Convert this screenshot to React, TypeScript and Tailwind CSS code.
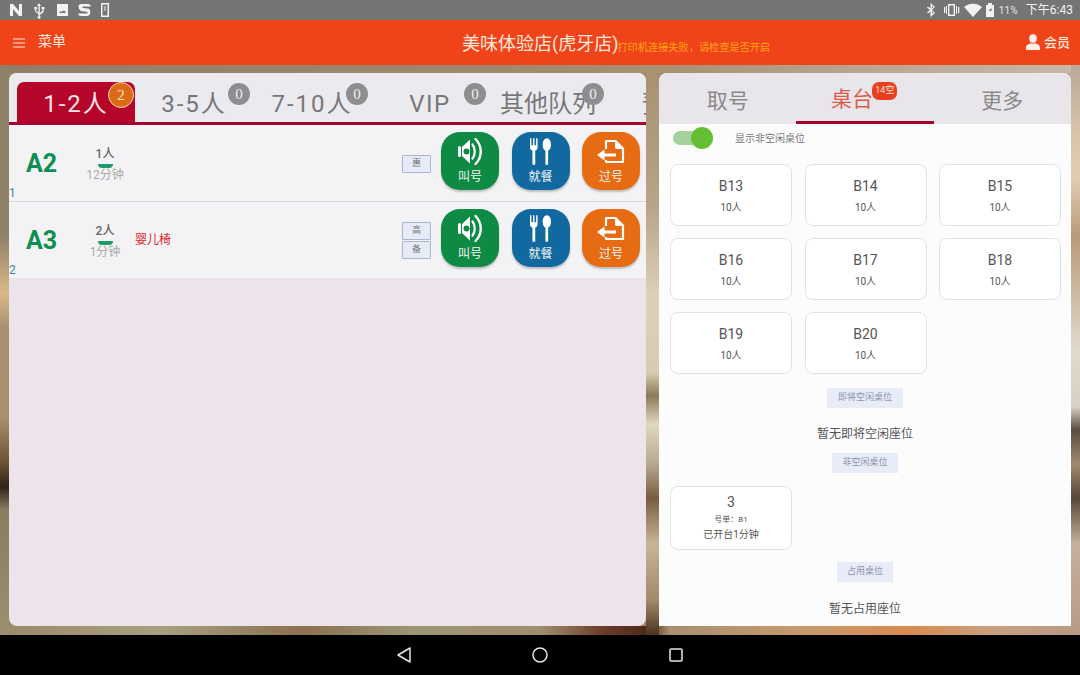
import React from "react";

const font = { fontFamily: 'Roboto, "Noto Sans CJK SC", sans-serif' };

function SpeakerIcon() {
  return (
    <svg viewBox="0 0 27 29" className="w-[27px] h-[29px]" fill="none" stroke="white">
      <path d="M2.500 10.500v8" strokeWidth="3" strokeLinecap="round" />
      <path d="M5 10 13 2.500v24L5 19z" fill="white" stroke="none" />
      <circle cx="9.500" cy="14.500" r="3" fill="#0f8a45" stroke="none" />
      <path d="M15.500 7.500c3 4 3 10 0 14" strokeWidth="2.200" strokeLinecap="round" />
      <path d="M18.500 2c7 7 7 18 0 25" strokeWidth="2.400" strokeLinecap="round" />
    </svg>
  );
}

function ForkIcon() {
  return (
    <svg viewBox="5 2 20.500 26" className="w-[21px] h-[27px] my-[1px]" fill="white" stroke="none">
      <path d="M5 2h1.400v7H8V2h1.400v7H11V2h1.400v9c0 1.600-1 2.600-2.300 3V28H7.400V14C6 13.600 5 12.600 5 11z" />
      <path d="M21.500 2c2.600 0 4 3 4 6.500 0 3-1.300 5.200-2.800 5.800V28h-2.600V14.300c-1.500-.6-2.700-2.800-2.700-5.800C17.400 5 18.900 2 21.500 2z" />
    </svg>
  );
}

function PassIcon() {
  return (
    <svg viewBox="0 0 28 25" className="w-[28px] h-[25px] my-[2px]" fill="none" stroke="white" strokeWidth="2.200">
      <path d="M9 10V2h9.500L26 9.500V23H9v-2" strokeLinejoin="round" />
      <path d="M18 1.500 26.500 10H20c-1.500 0-2-.8-2-2z" fill="white" stroke="none" />
      <path d="M0 16 7.500 10.500v11z" fill="white" stroke="none" />
      <path d="M6 16h13" strokeWidth="3" />
    </svg>
  );
}

function ActionButton({ color, label, icon }: { color: string; label: string; icon: React.ReactNode }) {
  return (
    <div className={`w-[58px] h-[58px] rounded-[19px] flex flex-col items-center pt-[5px] text-[#f0f5f2] shadow-[0_2px_2px_rgba(0,0,0,0.22)] ${color}`}>
      {icon}
      <span className="text-[12px] leading-[16px] mt-[3px]">{label}</span>
    </div>
  );
}

function Actions() {
  return (
    <div className="flex gap-[12.500px] ml-[10px] -mt-[5px]">
      <ActionButton color="bg-[#0f8a45]" label="叫号" icon={<SpeakerIcon />} />
      <ActionButton color="bg-[#12699f]" label="就餐" icon={<ForkIcon />} />
      <ActionButton color="bg-[#e66b12]" label="过号" icon={<PassIcon />} />
    </div>
  );
}

function Bowl() {
  return <div className="w-[15px] h-[4px] bg-[#1e9a68] rounded-b-[8px] mt-[3px] mb-[1px]" />;
}

function Row({ index, code, people, time, note, tags, last }: { index: string; code: string; people: string; time: string; note?: string; tags: string[]; last?: boolean }) {
  return (
    <div className={`relative h-[76px] box-content flex items-center bg-[#f3f3f5] pr-[6px] ${last ? "" : "border-b border-[#d8d9dd]"}`}>
      <span className="absolute left-0 bottom-[1px] text-[12px] leading-[14px] text-[#3f86a0]">{index}</span>
      <span className="ml-[17px] w-[38px] text-[25px] font-bold text-[#0e8f4f] mt-[1px]">{code}</span>
      <div className="w-[60px] ml-[11px] flex flex-col items-center mt-[3px]">
        <span className="text-[12px] leading-[13px] font-medium text-[#666]">{people}</span>
        <Bowl />
        <span className="text-[12px] leading-[13px] text-[#aaa]">{time}</span>
      </div>
      {note && <span className="text-[12px] text-[#d8232a]">{note}</span>}
      <div className="ml-auto flex flex-col mt-[1px]">
        {tags.map((t, i) => (
          <div key={t} className={`w-[29px] h-[18px] flex items-center justify-center bg-[#e6ebf7] border border-[#a9b6d0] rounded-[1px] text-[9px] text-[#777] ${i > 0 ? "mt-[1px]" : ""}`}>
            {t}
          </div>
        ))}
      </div>
      <Actions />
    </div>
  );
}

function QueueTab({ label, count, active, tracking }: { label: string; count?: number; active?: boolean; tracking: string }) {
  return (
    <div className={`relative shrink-0 w-[118px] h-[40px] flex items-center justify-center pt-[3px] rounded-t-[7px] text-[24px] whitespace-nowrap ${tracking} ${active ? "bg-[#b5052a] text-[#fbe3e6]" : "text-[#777]"}`}>
      {label}
      {count !== undefined &&
        (active ? (
          <span className="absolute right-[1px] top-0 w-[26px] h-[26px] rounded-full flex items-center justify-center text-[15px] tracking-normal bg-[#dc6a14] border border-[#fbd9b5] text-[#fde6c8] font-['Liberation_Serif',serif]">
            {count}
          </span>
        ) : (
          <span className="absolute right-[3px] top-[1px] w-[22px] h-[22px] rounded-full flex items-center justify-center text-[15px] tracking-normal bg-[#8e8e90] text-[#f1f1f1] font-['Liberation_Serif',serif]">
            {count}
          </span>
        ))}
    </div>
  );
}

function TableCard({ name }: { name: string }) {
  return (
    <div className="h-[62px] rounded-[8px] bg-white border-[1.500px] border-[#e2e2e4] flex flex-col items-center justify-center text-[#555]">
      <span className="text-[14px] leading-[20px]">{name}</span>
      <span className="text-[10px] leading-[14px] mt-[5px]">10人</span>
    </div>
  );
}

function Chip({ label, width }: { label: string; width: string }) {
  return (
    <div className="flex justify-center">
      <div className={`h-[20px] flex items-center justify-center bg-[#e8ecf8] text-[9px] text-[#8f96ab] ${width}`}>{label}</div>
    </div>
  );
}

export default function App() {
  const free = ["B13", "B14", "B15", "B16", "B17", "B18", "B19", "B20"];
  return (
    <div className="w-[1080px] h-[675px] flex flex-col overflow-hidden" style={font}>
      {/* status bar */}
      <div className="h-[20px] bg-[#757575] flex items-center pl-[10px] pr-[7px] text-white">
        <svg viewBox="0 0 100 20" className="w-[100px] h-[20px]" fill="#f2f2f2">
          <path d="M0 4h3l6 7V4h3v12H9L3 9v7H0z" />
          <path d="M29 3l2 3h-1.200v7l2.500-2V9h-.8V7h3v2h-.8v3l-3.900 3v1a1.500 1.500 0 1 1-1.400 0v-2l-3.300-2.500V9.500h-.8V7h2.800v2.500H26v1.200l2.400 1.800V6H27z" />
          <path d="M47 4h11v12H47zm2 9h7l-2-3-2 2-1-1z" fillRule="evenodd" />
          <path d="M71 4h7c2 0 2.500 1 3 2.500h-8c-1 0-1 1.500 0 1.500l5 .5c3.500.5 3 7.500-1 7.500h-6c-2 0-2.500-1-3-2.500h8.500c1.500 0 1.500-1.700 0-1.700l-4.500-.5C68 10.500 67.500 4 71 4z" />
          <path d="M91 3h8v14h-8zm1.500 1.500v11h5v-11zM94.500 6h1v5h-1z" fillRule="evenodd" />
        </svg>
        <div className="ml-auto flex items-center">
          <svg viewBox="0 0 68 16" className="w-[68px] h-[16px]" fill="#f2f2f2">
            <path d="M3.500 1l4.500 4-3 3 3 3-4.500 4V9.500L1 11.500 0 10.500 2.800 8 0 5.500l1-1 2.500 2zM5 4v2.800L6.300 5.300zm0 5.200V12l1.300-1.500z" fillRule="evenodd" />
            <path d="M21 2h7v12h-7zm1.400 1.400v9.200h4.200V3.400zM17 5h1.300v6H17zm2-1h1v8h-1zm10 0h1v8h-1zm2 1h1.300v6H31z" fillRule="evenodd" />
            <path d="M37 5c5-4.500 13-4.500 18 0l-9 10z" />
            <path d="M59 3h2V1h4v2h2v12h-8zm2.500 6h3V6z" fillRule="evenodd" />
          </svg>
          <span className="ml-[4px] text-[10px] text-[#e4e4e4] tracking-[0.200px]">11%</span>
          <span className="ml-[8px] text-[12px] text-[#f2f2f2]">下午6:43</span>
        </div>
      </div>

      {/* header */}
      <div className="h-[45px] bg-[#f1431a] flex items-center text-[#fde8dc]">
        <svg viewBox="0 0 12 10" className="ml-[13px] w-[12px] h-[10px]" stroke="#fdeee4" strokeWidth="1.200">
          <path d="M0 1h12M0 5h12M0 9h12" />
        </svg>
        <span className="ml-[13px] text-[14px] -mt-[3px]">菜单</span>
        <div className="ml-[396px] pt-[2px] flex items-baseline whitespace-nowrap">
          <span className="text-[18px] leading-[24px]">美味体验店(虎牙店)</span>
          <span className="text-[10.200px] text-[#ffa514] -ml-[1px] translate-y-[1px]">打印机连接失败，请检查是否开启</span>
        </div>
        <div className="ml-auto mr-[10px] flex items-center gap-[4px] text-[13px] font-medium">
          <svg viewBox="0 0 14 16" className="w-[14px] h-[16px] -mt-[2px]" fill="#fdf0e8">
            <ellipse cx="7" cy="4.500" rx="3.800" ry="4.300" />
            <path d="M0 16v-2.500C0 11 3 9.800 5 9.300c1.300.5 2.700.5 4 0 2 .5 5 1.700 5 4.200V16z" />
          </svg>
          会员
        </div>
      </div>

      {/* main */}
      <div className="h-[570px] flex gap-[13px] pt-[8px] pb-[9px] px-[9px] [background:linear-gradient(180deg,#8f8068_0%,#8f8068_30%,#d8b98a_40%,#a89070_46%,#a8906c_62%,#6a5030_70%,#2e2418_74%,#8a7c60_78%,#9c9070_100%)_0_0/9px_100%_no-repeat,linear-gradient(180deg,#a89070_0%,#b8a488_25%,#dcd0b8_40%,#d8ccb0_54%,#8a7a58_58%,#e0d8c0_63%,#b8a890_70%,#7a5c40_76%,#c8b498_84%,#a08868_94%,#4a3420_100%)_646px_0/13px_100%_no-repeat,linear-gradient(180deg,#b8a898_0%,#d8c4aa_12%,#e2cdb4_20%,#b89a78_30%,#e0dacc_50%,#d8d0c4_60%,#5a4c40_64%,#a08a70_70%,#584838_76%,#c4b09c_84%,#b89a88_100%)_1071px_0/9px_100%_no-repeat,linear-gradient(90deg,#9a8a6c_0%,#a8a080_15%,#8a7050_28%,#9c9474_38%,#a08f6e_50%,#6a3a28_56%,#4a2a1c_60%,#a89070_62%,#c89a6c_75%,#d88a50_84%,#c8a080_92%,#b89a88_100%)_0_100%/100%_9px_no-repeat,linear-gradient(90deg,#8f7d66_0%,#a08a6c_50%,#a89070_61%,#b8a690_80%,#c8b8a8_100%)_0_0/100%_8px_no-repeat,linear-gradient(90deg,#9a8a6c_0%,#a08a6c_60%,#c0a890_100%)]">
        {/* left panel */}
        <div className="w-[637px] rounded-[8px] overflow-hidden bg-[#ece4ea] flex flex-col">
          <div className="h-[52px] pt-[9px] bg-[#ebebef] border-b-[3px] border-[#a5062f]">
            <div className="flex pl-[8px] overflow-hidden">
              <QueueTab label="1-2人" count={2} active tracking="tracking-[2px]" />
              <QueueTab label="3-5人" count={0} tracking="tracking-[2px]" />
              <QueueTab label="7-10人" count={0} tracking="tracking-[2px]" />
              <QueueTab label="VIP" count={0} tracking="tracking-[1.500px]" />
              <QueueTab label="其他队列" count={0} tracking="tracking-normal" />
              <QueueTab label="预约" tracking="tracking-normal" />
            </div>
          </div>
          <Row index="1" code="A2" people="1人" time="12分钟" tags={["惠"]} />
          <Row index="2" code="A3" people="2人" time="1分钟" note="婴儿椅" tags={["高", "备"]} last />
        </div>

        {/* right panel */}
        <div className="w-[412px] rounded-t-[8px] overflow-hidden bg-[#fcfcfd] flex flex-col">
          <div className="h-[51px] bg-[#e8e6ea] grid grid-cols-3 text-[21px] text-[#8a8a8a]">
            <div className="flex items-center justify-center pt-[6px]">取号</div>
            <div className="relative flex items-center justify-center pt-[6px] pr-[26px] text-[#dc5a48] border-b-[3px] border-[#a5062f]">
              桌台
              <span className="absolute left-[76px] top-[9px] w-[25px] h-[18px] rounded-[7px] bg-[#ea3f1c] text-[9px] text-[#fde3da] flex items-center justify-center">14空</span>
            </div>
            <div className="flex items-center justify-center pt-[6px]">更多</div>
          </div>

          <div className="flex items-center h-[28px] pl-[14px]">
            <div className="relative w-[40px] h-[14px] rounded-full bg-[#a3d39a]">
              <span className="absolute right-0 top-[-4px] w-[22px] h-[22px] rounded-full bg-[#64c032]" />
            </div>
            <span className="ml-[22px] text-[10px] text-[#777]">显示非空闲桌位</span>
          </div>

          <div className="grid grid-cols-[122px_122px_122px] gap-x-[12.500px] gap-y-[12px] px-[11px] mt-[12px]">
            {free.map((n) => (
              <TableCard key={n} name={n} />
            ))}
          </div>

          <div className="mt-[14px]"><Chip label="即将空闲桌位" width="w-[76px]" /></div>
          <div className="text-center text-[12px] leading-[18px] text-[#555] mt-[17px]">暂无即将空闲座位</div>
          <div className="mt-[10px]"><Chip label="非空闲桌位" width="w-[66px]" /></div>

          <div className="grid grid-cols-[122px_122px_122px] px-[11px] mt-[13px]">
            <div className="h-[64px] rounded-[8px] bg-white border-[1.500px] border-[#e2e2e4] flex flex-col items-center justify-center text-[#555]">
              <span className="text-[14px] leading-[18px]">3</span>
              <span className="text-[8px] leading-[14px] mt-[2px]">号单：B1</span>
              <span className="text-[10px] leading-[16px]">已开台1分钟</span>
            </div>
          </div>

          <div className="mt-[12px]"><Chip label="占用桌位" width="w-[56px]" /></div>
          <div className="text-center text-[12px] leading-[18px] text-[#555] mt-[18px]">暂无占用座位</div>
        </div>
      </div>

      {/* nav */}
      <div className="h-[40px] bg-black flex items-center justify-center gap-[120px]">
        <svg viewBox="0 0 16 18" className="w-[16px] h-[18px]" fill="none" stroke="#e5e5e5" strokeWidth="1.500"><path d="M14 2v14L2 9z" strokeLinejoin="round" /></svg>
        <svg viewBox="0 0 16 18" className="w-[16px] h-[18px]" fill="none" stroke="#e5e5e5" strokeWidth="1.500"><circle cx="8" cy="9" r="7" /></svg>
        <svg viewBox="0 0 16 18" className="w-[16px] h-[18px]" fill="none" stroke="#e5e5e5" strokeWidth="1.500"><rect x="2" y="3" width="12" height="12" rx="1" /></svg>
      </div>
    </div>
  );
}
